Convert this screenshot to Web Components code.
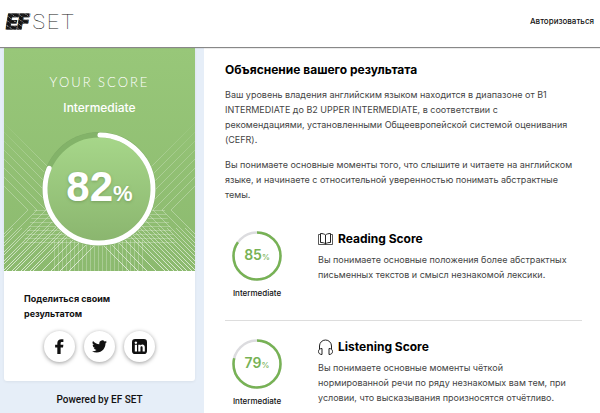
<!DOCTYPE html>
<html lang="ru">
<head>
<meta charset="utf-8">
<title>EF SET</title>
<style>
html, body { margin: 0; height: 100%; }
body { font: 9px/15px Inter, "Liberation Sans", sans-serif; color: #111; background: #fff; overflow: hidden; }
</style>
</head>
<body>
<efset-page></efset-page>
<script>
const define = (name, html, setup) => customElements.define(name, class extends HTMLElement {
  connectedCallback() {
    if (this.shadowRoot) return;
    const root = this.attachShadow({ mode: 'open' });
    root.innerHTML = html;
    if (setup) setup.call(this, root);
  }
});

define('efset-logo', `
<style>
:host { display: block; }
a { display: flex; align-items: center; gap: 4px; text-decoration: none; line-height: 24px; }
b { font: italic 900 21px/24px Roboto, sans-serif; color: transparent; -webkit-background-clip: text; background-clip: text;
  background-image: repeating-linear-gradient(35deg, #111 0 3px, #777 3px 4px); -webkit-text-stroke: 1px #222c; }
span { font: 100 21px/24px Roboto, sans-serif; color: #222; letter-spacing: 2px; }
</style>
<a href="#" aria-label="EF SET"><b>EF</b><span>SET</span></a>`);

define('efset-header', `
<style>
:host { display: flex; justify-content: space-between; align-items: center; height: 47px; padding: 0 6px;
  box-sizing: border-box; background: #fff; flex: none; position: relative; box-shadow: 0 1px 1px #888; }
a.login { font-size: 8px; font-weight: 500; color: #111; text-decoration: none; padding-bottom: 4px; }
efset-logo { padding-bottom: 3px; }
</style>
<efset-logo></efset-logo><a class="login" href="#">Авторизоваться</a>`);

define('score-hero', `
<style>
:host { display: grid; height: 223px; background: linear-gradient(#98c779, #8cba6f); color: #fff; overflow: hidden; }
svg, .copy { grid-area: 1 / 1; min-width: 0; }
svg { width: 100%; height: 224px; display: block; }
.copy { display: flex; flex-direction: column; align-items: center; padding-top: 25px; }
.title { font: 300 13px/18px Lato, sans-serif; letter-spacing: 2px; }
.level { font-size: 12px; font-weight: 500; line-height: 18px; margin-top: 8px; }
.value { margin-top: 46px; font: bold 42px/48px "Liberation Sans", sans-serif; text-shadow: 0 1px 3px #5a804488; }
.value small { font-size: 22px; }
</style>
<svg viewBox="0 0 191 224" preserveAspectRatio="xMidYMid slice" aria-hidden="true">
  <defs>
    <linearGradient id="disc" x2="0" y2="1"><stop stop-color="#a7d78a"/><stop offset="1" stop-color="#8ab56e"/></linearGradient>
    <linearGradient id="fade" x2="0" y2="224" gradientUnits="userSpaceOnUse">
      <stop offset=".32" stop-color="#fff" stop-opacity="0"/><stop offset=".5" stop-color="#fff" stop-opacity=".22"/>
      <stop offset=".78" stop-color="#fff" stop-opacity=".32"/><stop offset="1" stop-color="#fff" stop-opacity=".7"/>
    </linearGradient>
  </defs>
  <path id="grid" fill="none" stroke="#fff" stroke-opacity=".25"/>
  <path id="net" fill="none" stroke="url(#fade)"/>
  <circle cx="95" cy="141" r="57" fill="#7fac66"/>
  <circle cx="95" cy="141" r="54" fill="url(#disc)"/>
  <circle cx="95" cy="141" r="54" fill="none" stroke="#83b369" stroke-width="5"/>
  <circle cx="95" cy="141" r="54" fill="none" stroke="#fff" stroke-width="5" stroke-linecap="round"
    pathLength="100" stroke-dasharray="81 100" transform="rotate(-89 95 141)"/>
</svg>
<div class="copy">
  <div class="title">YOUR SCORE</div>
  <div class="level">Intermediate</div>
  <div class="value">82<small>%</small></div>
</div>`, function (root) {
  let net = '', grid = '';
  // side chevrons, mirrored left and right
  for (let x = 24; x < 90; x += 9) {
    const y = 162, drop = 62;
    net += `M-1 ${y - x - 1}L${x} ${y}L${x - drop} ${y + drop}`;
    net += `M192 ${y - x - 1}L${191 - x} ${y}L${191 - x + drop} ${y + drop}`;
  }
  // rays that spread from the centre towards the bottom corners
  for (let k = 0; k < 12; k++) {
    const top = 193 - k * 9, reach = 224 - top, cut = Math.max(0, 180 - top);
    net += `M${95 - reach} 224L${95 - cut} ${top + cut}M${95 + cut} ${top + cut}L${95 + reach} 224`;
  }
  for (let y = 162; y < 198; y += 4) grid += `M${30 - (y - 162) / 3} ${y + .5}H${161 + (y - 162) / 3}`;
  for (let x = 50; x < 142; x += 4) grid += `M${x + .5} 192V224`;
  root.getElementById('net').setAttribute('d', net);
  root.getElementById('grid').setAttribute('d', grid);
});

define('share-button', `
<style>
:host { display: block; }
button { display: grid; place-items: center; width: 31px; height: 31px; padding: 0; border: 0; border-radius: 50%;
  background: #fff; box-shadow: 0 1px 4px #0006; }
svg { display: block; width: 15px; height: 15px; fill: #111; }
</style>
<button type="button"><svg viewBox="0 0 24 24" aria-hidden="true"><path fill-rule="evenodd"/></svg></button>`, function (root) {
  const icons = {
    Facebook: 'M8.500 24V13.500H5V9.200H8.500V6.500C8.500 2.600 11.200.3 14.900.3c1.500 0 2.800.1 3.300.2v4.200h-2.200c-1.800 0-2.200.9-2.200 2.100v2.400h4.400l-.6 4.300h-3.800V24z',
    Twitter: 'M23.950 4.570a10 10 0 0 1-2.820.770 4.960 4.960 0 0 0 2.160-2.720c-.950.550-2 .950-3.130 1.180a4.920 4.920 0 0 0-8.380 4.480C7.690 8.090 4.070 6.130 1.640 3.160a4.920 4.920 0 0 0 1.520 6.570 4.900 4.900 0 0 1-2.230-.610v.060a4.920 4.920 0 0 0 3.950 4.830 5 5 0 0 1-2.210.080 4.940 4.940 0 0 0 4.600 3.420A9.870 9.870 0 0 1 0 19.540a14 14 0 0 0 7.550 2.210c9.050 0 14-7.500 14-13.980 0-.210 0-.420-.020-.630a9.900 9.900 0 0 0 2.420-2.570z',
    LinkedIn: 'M5 0h14a5 5 0 0 1 5 5v14a5 5 0 0 1-5 5H5a5 5 0 0 1-5-5V5a5 5 0 0 1 5-5zM4.500 9v11H8V9zM6.200 3.800a2 2 0 1 0 .01 0zM10 9v11h3.500v-6c0-3 3.500-3 3.500 0v6h3.500v-7c0-5-5-5.500-7-2.500V9z'
  };
  const label = this.getAttribute('label');
  root.querySelector('button').setAttribute('aria-label', label);
  root.querySelector('path').setAttribute('d', icons[label]);
});

define('score-sidebar', `
<style>
:host { display: block; flex: 0 0 34%; box-sizing: border-box; padding: 0 9px 0 4px; background: #e6eef8; }
article { background: #fff; border-radius: 0 0 3px 3px; box-shadow: 0 1px 3px #0000000f; }
.share { padding: 20px 20px 19px; }
h2 { margin: 0 0 10px; font-size: 9px; line-height: 15px; font-weight: 700; max-width: 110px; }
nav { display: flex; justify-content: center; gap: 9px; }
p { margin: 11px 0 0; text-align: center; font: 500 10px/15px Roboto, sans-serif; }
</style>
<article>
  <score-hero></score-hero>
  <div class="share">
    <h2>Поделиться своим результатом</h2>
    <nav><share-button label="Facebook"></share-button><share-button label="Twitter"></share-button><share-button label="LinkedIn"></share-button></nav>
  </div>
</article>
<p>Powered by EF SET</p>`);

define('score-ring', `
<style>
:host { display: grid; justify-items: center; width: 64px; }
svg, b { grid-area: 1 / 1; }
svg { width: 50px; height: 50px; fill: none; stroke-width: 2.500; }
b { align-self: center; font-size: 14px; line-height: 20px; font-weight: 600; color: #77b255; }
small { font-size: 8px; font-weight: 500; }
span { margin-top: 5px; font-size: 8px; font-weight: 500; line-height: 14px; }
</style>
<svg viewBox="0 0 50 50" aria-hidden="true"><circle cx="25" cy="25" r="23.500" stroke="#dcdcdf"/>
<circle class="arc" cx="25" cy="25" r="23.500" stroke="#77b255" pathLength="100" transform="rotate(-90 25 25)"/></svg>
<b></b><span><slot></slot></span>`);

define('skill-score', `
<style>
:host { display: grid; grid-template-columns: 64px minmax(0, 1fr); column-gap: 29px; }
h3 { display: flex; align-items: center; gap: 5px; margin: 0; font-size: 12px; line-height: 16px; font-weight: 700; color: #000; }
p { margin: 5px 0 0; line-height: 15px; color: #444; }
</style>
<score-ring></score-ring>
<div><h3><slot name="icon"></slot><slot name="title"></slot></h3><p><slot></slot></p></div>`, function (root) {
  const ring = root.querySelector('score-ring');
  const value = this.getAttribute('value');
  ring.shadowRoot.querySelector('b').innerHTML = `${value}<small>%</small>`;
  ring.shadowRoot.querySelector('.arc').setAttribute('stroke-dasharray', `${value} 100`);
  ring.textContent = this.getAttribute('level');
});

define('score-details', `
<style>
:host { display: block; flex: 1; min-width: 0; padding: 14px 18px 0 21px; background: #fff; }
h1 { margin: 0 0 9px; font-size: 12px; line-height: 16px; font-weight: 700; color: #000; }
p { margin: 0 0 10px; line-height: 15px; color: #444; }
hr { border: 0; border-top: 1px solid #ddd; margin: 20px 0 18px; }
skill-score.first { margin-top: 29px; }
svg { width: 15px; height: 16px; fill: none; stroke: #222; stroke-width: 1; flex: none; }
</style>
<h1>Объяснение вашего результата</h1>
<p>Ваш уровень владения английским языком находится в диапазоне от B1<br>INTERMEDIATE до B2 UPPER INTERMEDIATE, в соответствии с<br>рекомендациями, установленными Общеевропейской системой оценивания<br>(CEFR).</p>
<p>Вы понимаете основные моменты того, что слышите и читаете на английском<br>языке, и начинаете с относительной уверенностью понимать абстрактные<br>темы.</p>
<skill-score class="first" value="85" level="Intermediate">
  <svg slot="icon" viewBox="0 0 15 16" aria-hidden="true"><path d="M7.500 4C6.500 3 4.500 2.500 2.500 2.500v9c2 0 4 .3 5 1.500 1-1.200 3-1.500 5-1.500v-9c-2 0-4 .5-5 1.500zM7.500 4v9"/><path stroke-opacity=".75" d="M2.500 3.500h-2v10h14v-10h-2"/></svg>
  <span slot="title">Reading Score</span>Вы понимаете основные положения более абстрактных<br>письменных текстов и смысл незнакомой лексики.
</skill-score>
<hr>
<skill-score value="79" level="Intermediate">
  <svg slot="icon" viewBox="0 0 15 16" aria-hidden="true"><path d="M1.500 10V7a6 6 0 0 1 12 0v3M4 9.500v6c-2 0-3.500-1-3.500-3s1.500-3 3.500-3zM11 9.500v6c2 0 3.500-1 3.500-3s-1.500-3-3.500-3z"/></svg>
  <span slot="title">Listening Score</span>Вы понимаете основные моменты чёткой<br>нормированной речи по ряду незнакомых вам тем, при<br>условии, что высказывания произносятся отчётливо.
</skill-score>`);

define('efset-page', `
<style>
:host { display: flex; flex-direction: column; min-height: 100%; }
main { display: flex; flex: 1; padding-top: 1px; }
</style>
<efset-header></efset-header>
<main><score-sidebar></score-sidebar><score-details></score-details></main>`);
</script>
</body>
</html>
